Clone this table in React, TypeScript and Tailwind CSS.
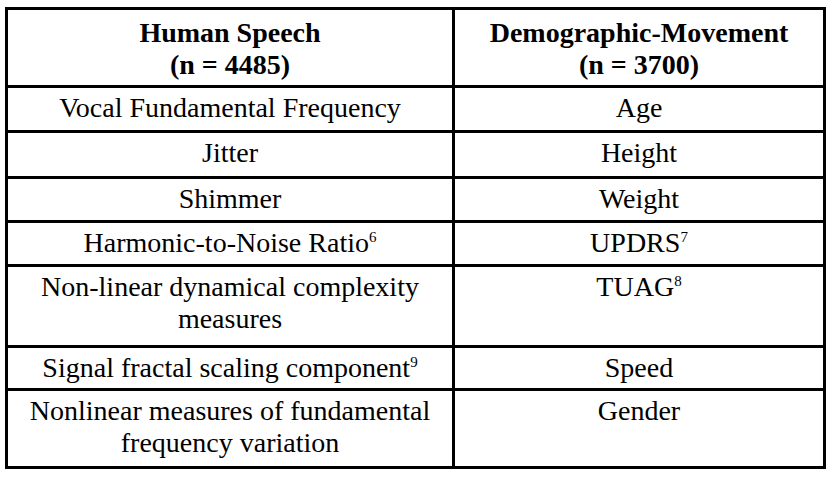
const rows: { left: React.ReactNode; right: React.ReactNode; h: string }[] = [
  { left: "Vocal Fundamental Frequency", right: "Age", h: "h-[45px]" },
  { left: "Jitter", right: "Height", h: "h-[46px]" },
  { left: "Shimmer", right: "Weight", h: "h-[44px]" },
  {
    left: (
      <>
        Harmonic-to-Noise Ratio<sup className="text-[15px] top-[-10px]">6</sup>
      </>
    ),
    right: (
      <>
        UPDRS<sup className="text-[15px] top-[-10px]">7</sup>
      </>
    ),
    h: "h-[44px]",
  },
  {
    left: (
      <>
        Non-linear dynamical complexity
        <br />
        measures
      </>
    ),
    right: (
      <>
        TUAG<sup className="text-[15px] top-[-10px]">8</sup>
      </>
    ),
    h: "h-[81px]",
  },
  {
    left: (
      <>
        Signal fractal scaling component<sup className="text-[15px] top-[-10px]">9</sup>
      </>
    ),
    right: "Speed",
    h: "h-[43px]",
  },
  {
    left: (
      <>
        Nonlinear measures of fundamental
        <br />
        frequency variation
      </>
    ),
    right: "Gender",
    h: "h-[78px]",
  },
];

export default function App() {
  return (
    <div className="w-[835px] h-[477px] bg-white pl-[5px] pt-[7px] text-black font-[Liberation_Serif,Times_New_Roman,serif] text-[28px] leading-[32px]">
      <div className="w-[821px] border-[3px] border-black">
        <div className="flex h-[75px] font-bold">
          <div className="w-[444px] pt-[7px] text-center">
            Human Speech
            <br />
            (n = 4485)
          </div>
          <div className="w-[371px] border-l-[3px] border-black pt-[7px] text-center">
            Demographic-Movement
            <br />
            (n = 3700)
          </div>
        </div>
        {rows.map((r, i) => (
          <div key={i} className={`flex border-t-[3px] border-black ${r.h}`}>
            <div className="w-[444px] pt-[4px] text-center">{r.left}</div>
            <div className="w-[371px] border-l-[3px] border-black pt-[4px] text-center">{r.right}</div>
          </div>
        ))}
      </div>
    </div>
  );
}
